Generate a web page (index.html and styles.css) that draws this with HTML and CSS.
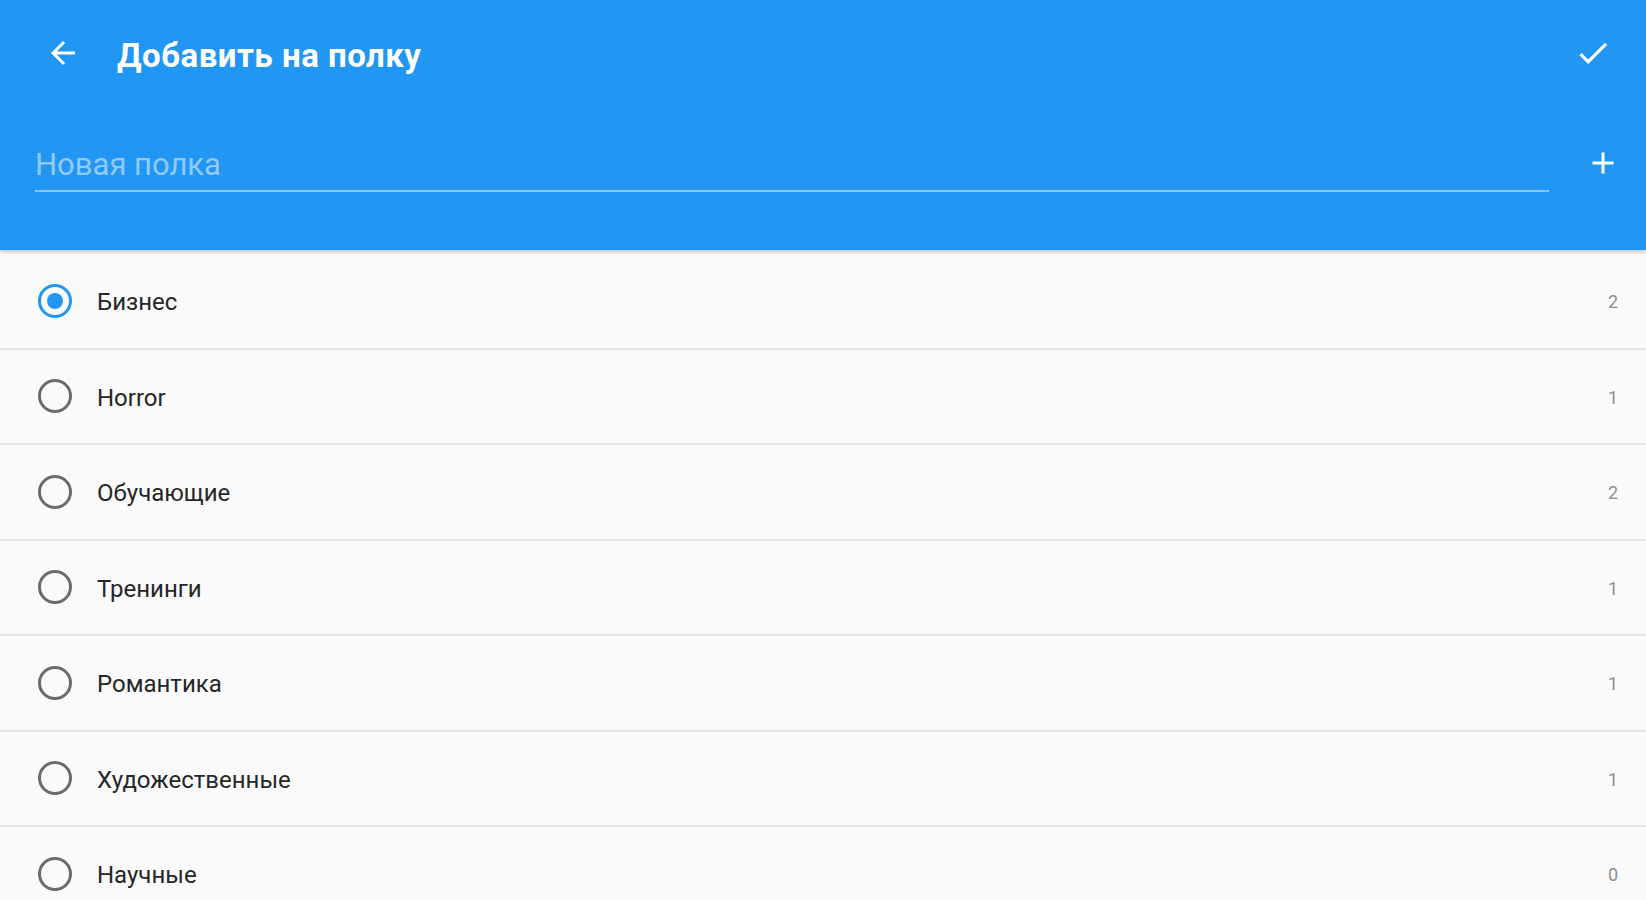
FILE: index.html
```html
<!DOCTYPE html>
<html lang="ru">
<head>
<meta charset="utf-8">
<title>Добавить на полку</title>
<link rel="stylesheet" href="styles.css">
</head>
<body>
<header class="appbar">
  <div class="toolbar">
    <span class="icon-btn back">
      <svg width="36" height="36" viewBox="0 0 24 24"><path d="M20 11H7.83l5.59-5.59L12 4l-8 8 8 8 1.41-1.41L7.83 13H20v-2z" fill="#fff"/></svg>
    </span>
    <h1 class="title">Добавить на полку</h1>
    <span class="icon-btn done">
      <svg width="38" height="38" viewBox="0 0 24 24"><path d="M9 16.17L4.83 12l-1.42 1.41L9 19 21 7l-1.41-1.41z" fill="#fff"/></svg>
    </span>
  </div>
  <div class="new-shelf">
    <div class="field">Новая полка</div>
    <span class="icon-btn add">
      <svg width="36" height="36" viewBox="0 0 24 24"><path d="M19 13h-6v6h-2v-6H5v-2h6V5h2v6h6v2z" fill="#fff"/></svg>
    </span>
  </div>
</header>
<main class="list">
  <div class="row"><span class="radio checked"></span><span class="name">Бизнес</span><span class="count">2</span></div>
  <div class="row"><span class="radio"></span><span class="name">Horror</span><span class="count">1</span></div>
  <div class="row"><span class="radio"></span><span class="name">Обучающие</span><span class="count">2</span></div>
  <div class="row"><span class="radio"></span><span class="name">Тренинги</span><span class="count">1</span></div>
  <div class="row"><span class="radio"></span><span class="name">Романтика</span><span class="count">1</span></div>
  <div class="row"><span class="radio"></span><span class="name">Художественные</span><span class="count">1</span></div>
  <div class="row"><span class="radio"></span><span class="name">Научные</span><span class="count">0</span></div>
</main>
</body>
</html>
```
FILE: styles.css
```css
* { box-sizing: border-box; }
html, body { margin: 0; padding: 0; }
body {
  background: #fafafa;
  font-family: Roboto, "Noto Sans", "Liberation Sans", sans-serif;
  width: 1646px;
  height: 900px;
  overflow: hidden;
}
.appbar {
  background: #2196f3;
  height: 250px;
  position: relative;
  z-index: 1;
  box-shadow: 0 2px 4px rgba(0,0,0,0.22);
}
.toolbar {
  height: 106px;
  display: flex;
  align-items: center;
  padding: 0 34px 0 45px;
}
.icon-btn { display: flex; align-items: center; justify-content: center; }
.title {
  margin: 0 0 0 36px;
  padding-top: 5px;
  flex: 1;
  color: #fff;
  font-size: 33px;
  letter-spacing: 0.5px;
  line-height: 38px;
  font-weight: 700;
}
.new-shelf {
  display: flex;
  align-items: flex-end;
  padding: 39px 25px 0 35px;
}
.field {
  flex: 1;
  color: #93c9f8;
  font-size: 31px;
  line-height: 38px;
  padding-bottom: 6px;
  border-bottom: 2.5px solid #8ec5f7;
}
.add { margin-left: 36px; margin-bottom: 11px; }
.list { padding-top: 4px; }
.row {
  height: 95.5px;
  border-bottom: 2px solid #e5e5e5;
  display: flex;
  align-items: center;
  padding: 0 28px 0 38px;
}
.radio {
  width: 34px;
  height: 34px;
  border: 3px solid #6b6b6b;
  border-radius: 50%;
  display: flex;
  align-items: center;
  justify-content: center;
  flex: none;
}
.radio.checked { border-color: #2196f3; }
.radio.checked::after {
  content: "";
  width: 16px;
  height: 16px;
  border-radius: 50%;
  background: #2196f3;
}
.name {
  margin-left: 25px;
  padding-top: 3px;
  flex: 1;
  font-size: 24px;
  color: #262626;
}
.count {
  font-size: 18px;
  padding-top: 2px;
  color: #8f8f8f;
}
```
